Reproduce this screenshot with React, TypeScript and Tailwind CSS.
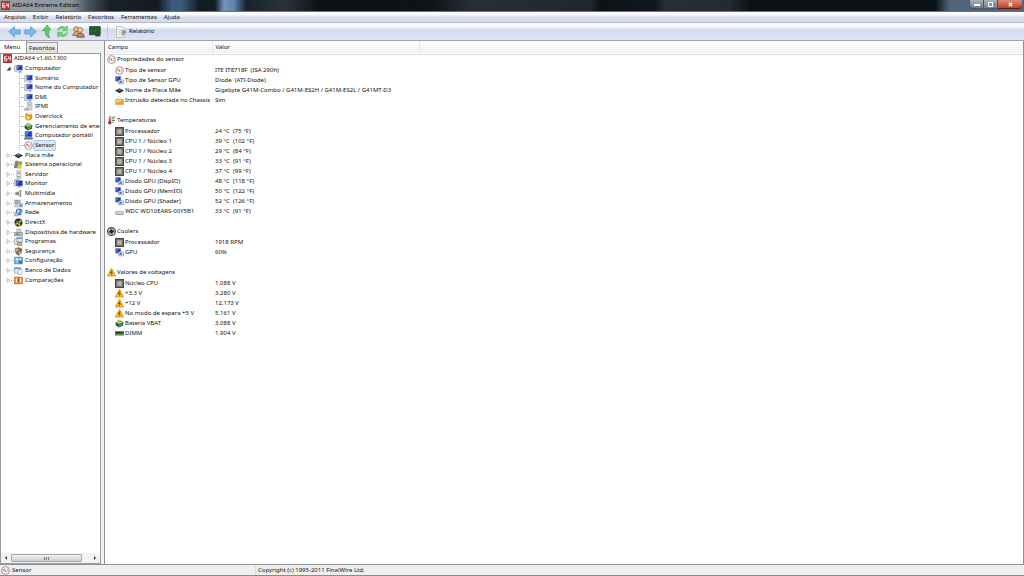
import { useState } from 'react'
import type { ReactNode } from 'react'
import clsx from 'clsx'

type IconName =
  | 'aida' | 'pc' | 'ipmi' | 'flame' | 'battery' | 'laptop' | 'sensor' | 'board' | 'windows' | 'server'
  | 'monitor' | 'speaker' | 'storage' | 'network' | 'directx' | 'devices' | 'programs' | 'shield'
  | 'config' | 'database' | 'compare' | 'gpu' | 'lock' | 'thermo' | 'chip' | 'disk' | 'fan' | 'warning' | 'dimm'

const screens = (
  <>
    <path d="M1 3h4v11H1z" fill="#d5d9e0" stroke="#a2a8b3" />
    <path d="M5 2h10v9H5z" fill="#1d36b8" stroke="#9aa6c4" />
    <path d="M6 3h5l-4 6H6z" fill="#5a7cf0" />
    <path d="M8 12h5v2h2v1H6v-1h2z" fill="#9aa1ad" />
  </>
)

const ICONS: Record<IconName, ReactNode> = {
  aida: (
    <>
      <path d="M0 0h16v16H0z" fill="#b83030" />
      <path d="M7 4H3v8h4V8H3M10 4v4h4M13 4v8" fill="none" stroke="#fff" strokeWidth="1.5" />
    </>
  ),
  pc: screens,
  ipmi: (
    <>
      <path d="M6 1h8v13H6z" fill="#d5d7da" stroke="#9b9ea3" />
      <path d="M8 4h4M8 6h4" stroke="#999" />
      <path d="M1 11h7v4H1z" fill="#c9bcc1" stroke="#999" />
    </>
  ),
  flame: (
    <>
      <path d="M4 1c2 1 3 3 5 4l4-2c4 5 2 12-5 12S0 9 4 1z" fill="#ef8c22" />
      <path d="M5 5c2 2 5 3 6 6 0 3-8 3-7-1z" fill="#ffcf62" />
    </>
  ),
  battery: (
    <>
      <path d="M1 6l8-4 6 4-1 6-7 3-6-4z" fill="#35543c" />
      <path d="M2 6l7-3 5 3-7 3z" fill="#9ccf8a" />
      <path d="M7 10l6-3v3l-6 4z" fill="#4aa648" />
      <path d="M3 3l3-2 2 2-3 2z" fill="#e2c14b" />
    </>
  ),
  laptop: (
    <>
      <path d="M2 1h12v9H2z" fill="#2038c4" stroke="#556" />
      <path d="M3 2h6L4 9H3z" fill="#6482ee" />
      <path d="M1 11h14l1 4H0z" fill="#5c6f9e" />
    </>
  ),
  sensor: (
    <>
      <circle cx="8" cy="8" r="7" fill="#f8f1ee" stroke="#a08a88" strokeWidth="1.5" />
      <path d="M4 10a4 4 0 0 1 1-5M12 10a4 4 0 0 0-1-5" fill="none" stroke="#c08a80" strokeWidth="1.5" />
      <path d="M6 5l3 6" stroke="#b8433a" strokeWidth="1.5" />
    </>
  ),
  board: (
    <>
      <path d="M0 8l8-4 8 4-8 5z" fill="#2d2d2d" />
      <path d="M4 7l4-2 4 2-4 2z" fill="#777" />
    </>
  ),
  windows: (
    <>
      <path d="M2 2c2-1 4-1 6 0L7 8C5 7 3 7 1 8z" fill="#e4602c" />
      <path d="M8 2c2 1 5 1 7 0l-1 6c-2 1-5 1-7 0z" fill="#6fb443" />
      <path d="M1 8c2-1 4-1 6 0l-1 7c-2-1-4-1-6 0z" fill="#3f7fd0" />
      <path d="M7 8c2 1 5 1 7 0l-1 7c-2 1-5 1-7 0z" fill="#f2c13a" />
    </>
  ),
  server: (
    <>
      <path d="M5 1h7v14H5z" fill="#e0e6ea" stroke="#95a4ac" />
      <path d="M6 4h5M6 6h5" stroke="#5f7c8c" />
      <path d="M6 12h5" stroke="#57a867" strokeWidth="2" />
    </>
  ),
  monitor: (
    <>
      <path d="M1 1h8v11H1z" fill="#ccd2e2" stroke="#8b93ab" />
      <path d="M4 3h11v9H4z" fill="#1a2fc0" stroke="#6372a8" />
      <path d="M5 4h5l-4 6H5z" fill="#5775f0" />
      <path d="M7 13h6v2H7z" fill="#8790a5" />
    </>
  ),
  speaker: (
    <>
      <path d="M3 6h4l5-4v12l-5-4H3z" fill="#8d929b" stroke="#5c6068" />
      <path d="M10 4v8" stroke="#d6d9df" strokeWidth="2" />
    </>
  ),
  storage: (
    <>
      <path d="M1 2h10v5H1z" fill="#bfcbd0" stroke="#72858f" />
      <path d="M2 8h13v6H2z" fill="#dde3e6" stroke="#72858f" />
      <path d="M9 10h5v3H9z" fill="#3b9c78" />
      <path d="M3 4h5M4 10h3" stroke="#4d626c" />
    </>
  ),
  network: (
    <>
      <circle cx="9" cy="7" r="6" fill="#3c7fca" />
      <path d="M6 3l4 1-1 4-3 1zM11 8l3-2-1 5z" fill="#e3eff9" />
      <path d="M1 9h6v5H1z" fill="#c5d8ec" stroke="#5f7fa8" />
    </>
  ),
  directx: (
    <>
      <circle cx="8" cy="8" r="7" fill="#272a20" />
      <path d="M3 4l5 3 4-4 2 3-4 3 2 4-3 1-2-4-4 3-1-3 4-2z" fill="#e6c92f" />
      <circle cx="8" cy="8" r="2" fill="#3b7c34" />
    </>
  ),
  devices: (
    <>
      <path d="M5 2h7v6H5z" fill="#d4d6d8" stroke="#888d92" />
      <path d="M1 8h14v6H1z" fill="#b6babd" stroke="#777d82" />
      <path d="M3 11h6" stroke="#4c8f56" strokeWidth="2" />
    </>
  ),
  programs: (
    <>
      <path d="M1 3h10v10H1z" fill="#efe8d2" stroke="#8c8976" />
      <path d="M5 1h10v8H5z" fill="#dfe7ef" stroke="#7f8a96" />
      <path d="M5 2h10" stroke="#4f82c0" strokeWidth="2" />
      <path d="M6 9h8v6H6z" fill="#c9b48a" stroke="#7d6c4c" />
    </>
  ),
  shield: (
    <>
      <path d="M8 1l6 2c0 6-1 9-6 12C3 12 2 9 2 3z" fill="#3d69b8" stroke="#8a7a5a" />
      <path d="M8 2v6H3V4zM8 8h5c-1 3-2 4-5 6z" fill="#e9b62e" />
      <path d="M8 2l5 2v4H8z" fill="#c4552c" />
    </>
  ),
  config: (
    <>
      <path d="M1 2h14v12H1z" fill="#68a9dc" stroke="#3a78ac" />
      <path d="M3 4h5v4H3zM10 4h3v3h-3zM3 10h4v2H3z" fill="#d7ecf9" />
      <path d="M9 9h5v4H9z" fill="#2b6aa3" />
    </>
  ),
  database: (
    <>
      <path d="M1 3h11v10H1z" fill="#dfe8f2" stroke="#7890ab" />
      <path d="M1 4h11" stroke="#4c7db6" strokeWidth="2" />
      <path d="M8 6h6v9H8z" fill="#f5f7f9" stroke="#8797a8" />
    </>
  ),
  compare: (
    <>
      <path d="M1 2h14v12H1z" fill="#e8762b" stroke="#b65e17" />
      <path d="M3 4h3v8H3zM10 4h3v8h-3z" fill="#ffe4bb" />
      <path d="M7 5h2v6H7z" fill="#c23c1c" />
    </>
  ),
  gpu: (
    <>
      <path d="M1 1h9v8H1z" fill="#2237b8" stroke="#6a78a8" />
      <path d="M2 2h4L3 7H2z" fill="#6484f2" />
      <path d="M6 7h9v7H6z" fill="#dde2ec" stroke="#7c86a0" />
      <path d="M8 9h4v3H8z" fill="#3b54c8" />
    </>
  ),
  lock: (
    <>
      <path d="M5 6V3a3 3 0 0 1 5 0" fill="none" stroke="#d8c8a0" strokeWidth="1.5" />
      <path d="M1 6h14v9H1z" fill="#f2a024" stroke="#dc8e24" />
      <path d="M2 7h12L2 12z" fill="#ffd77a" />
    </>
  ),
  thermo: (
    <>
      <path d="M4 1h3v9H4z" fill="#eee" stroke="#8a4444" />
      <circle cx="5" cy="12" r="3" fill="#b3242c" />
      <path d="M5 4v7" stroke="#b3242c" strokeWidth="2" />
      <path d="M9 2h6M9 5h4M9 8h5M9 11h3" stroke="#555" strokeWidth="1.5" />
    </>
  ),
  chip: (
    <>
      <path d="M1 1h14v14H1z" fill="#77776f" stroke="#484844" strokeWidth="2" />
      <path d="M4 4h8v8H4z" fill="#b4b4ac" />
    </>
  ),
  disk: (
    <>
      <path d="M1 8l2-2h10l2 2z" fill="#ececec" />
      <path d="M1 8h14v5H1z" fill="#d6d6d6" stroke="#999" />
      <path d="M3 13h11" stroke="#777" />
    </>
  ),
  fan: (
    <>
      <circle cx="8" cy="8" r="7" fill="#d8d8d8" stroke="#444" strokeWidth="2" />
      <path d="M8 8L5 3h5zM8 8l5-3v5zM8 8l3 5H6zM8 8l-5 3V6z" fill="#555" />
      <circle cx="8" cy="8" r="3" fill="#1c1c1c" />
    </>
  ),
  warning: (
    <>
      <path d="M8 1l7 13H1z" fill="#fbb52c" stroke="#eda324" strokeWidth="2" strokeLinejoin="round" />
      <path d="M9 4L6 8h3l-1 4" fill="none" stroke="#6b3c08" strokeWidth="1.5" />
    </>
  ),
  dimm: (
    <>
      <path d="M0 4h16v7H0z" fill="#3a7a48" />
      <path d="M2 5h3v3H2zM6 5h3v3H6zM10 5h3v3h-3z" fill="#28352b" />
      <path d="M0 11h16" stroke="#b9a650" strokeWidth="2" />
    </>
  ),
}

function Icon({ name }: { name: IconName }) {
  return <svg viewBox="0 0 16 16" className="size-[9px] shrink-0" aria-hidden="true">{ICONS[name]}</svg>
}

const MENUS = ['Arquivo', 'Exibir', 'Relatório', 'Favoritos', 'Ferramentas', 'Ajuda']

interface Node {
  label: string
  icon: IconName
  level: 0 | 1 | 2
  open?: boolean
}

const TREE: Node[] = [
  { label: 'AIDA64 v1.60.1300', icon: 'aida', level: 0 },
  { label: 'Computador', icon: 'pc', level: 1, open: true },
  { label: 'Sumário', icon: 'pc', level: 2 },
  { label: 'Nome do Computador', icon: 'pc', level: 2 },
  { label: 'DMI', icon: 'pc', level: 2 },
  { label: 'IPMI', icon: 'ipmi', level: 2 },
  { label: 'Overclock', icon: 'flame', level: 2 },
  { label: 'Gerenciamento de ener', icon: 'battery', level: 2 },
  { label: 'Computador portátil', icon: 'laptop', level: 2 },
  { label: 'Sensor', icon: 'sensor', level: 2 },
  { label: 'Placa mãe', icon: 'board', level: 1 },
  { label: 'Sistema operacional', icon: 'windows', level: 1 },
  { label: 'Servidor', icon: 'server', level: 1 },
  { label: 'Monitor', icon: 'monitor', level: 1 },
  { label: 'Multimídia', icon: 'speaker', level: 1 },
  { label: 'Armazenamento', icon: 'storage', level: 1 },
  { label: 'Rede', icon: 'network', level: 1 },
  { label: 'DirectX', icon: 'directx', level: 1 },
  { label: 'Dispositivos de hardware', icon: 'devices', level: 1 },
  { label: 'Programas', icon: 'programs', level: 1 },
  { label: 'Segurança', icon: 'shield', level: 1 },
  { label: 'Configuração', icon: 'config', level: 1 },
  { label: 'Banco de Dados', icon: 'database', level: 1 },
  { label: 'Comparações', icon: 'compare', level: 1 },
]

interface Group {
  title: string
  icon: IconName
  rows: [IconName, string, string][]
}

const GROUPS: Group[] = [
  {
    title: 'Propriedades do sensor',
    icon: 'sensor',
    rows: [
      ['sensor', 'Tipo de sensor', 'ITE IT8718F  (ISA 290h)'],
      ['gpu', 'Tipo de Sensor GPU', 'Diode  (ATI-Diode)'],
      ['board', 'Nome da Placa Mãe', 'Gigabyte G41M-Combo / G41M-ES2H / G41M-ES2L / G41MT-D3'],
      ['lock', 'Intrusão detectada no Chassis', 'Sim'],
    ],
  },
  {
    title: 'Temperaturas',
    icon: 'thermo',
    rows: [
      ['chip', 'Processador', '24 °C  (75 °F)'],
      ['chip', 'CPU 1 / Núcleo 1', '39 °C  (102 °F)'],
      ['chip', 'CPU 1 / Núcleo 2', '29 °C  (84 °F)'],
      ['chip', 'CPU 1 / Núcleo 3', '33 °C  (91 °F)'],
      ['chip', 'CPU 1 / Núcleo 4', '37 °C  (99 °F)'],
      ['gpu', 'Diodo GPU (DispIO)', '48 °C  (118 °F)'],
      ['gpu', 'Diodo GPU (MemIO)', '50 °C  (122 °F)'],
      ['gpu', 'Diodo GPU (Shader)', '52 °C  (126 °F)'],
      ['disk', 'WDC WD10EARS-00Y5B1', '33 °C  (91 °F)'],
    ],
  },
  {
    title: 'Coolers',
    icon: 'fan',
    rows: [
      ['chip', 'Processador', '1918 RPM'],
      ['gpu', 'GPU', '60%'],
    ],
  },
  {
    title: 'Valores de voltagens',
    icon: 'warning',
    rows: [
      ['chip', 'Núcleo CPU', '1.088 V'],
      ['warning', '+3.3 V', '3.280 V'],
      ['warning', '+12 V', '12.173 V'],
      ['warning', 'No modo de espera +5 V', '5.161 V'],
      ['battery', 'Bateria VBAT', '3.088 V'],
      ['dimm', 'DIMM', '1.904 V'],
    ],
  },
]

function TitleBar() {
  return (
    <header className="flex h-[12px] shrink-0 items-center border-b border-[#6d7077] bg-[linear-gradient(90deg,#959ca3_0px,#8f979e_70px,#4a545e_88px,#182028_110px,#141b23_158px,#3c5a7a_172px,#3c5a7a_182px,#131b23_200px,#141c24_215px,#7295bd_224px,#5f84ad_234px,#18222c_246px,#2b333a_285px,#0a1117_320px,#0c1319_430px,#262f36_470px,#20282f_590px,#0b1319_600px,#0f181f_655px,#262f36_665px,#222b32_730px,#0a1218_750px,#0a1218_935px,#51647a_950px)] pl-px">
      <Icon name="aida" />
      <h1 className="ml-[2px] flex-1 text-black">AIDA64 Extreme Edition</h1>
      <div className="flex h-[9px] self-start pr-[2px]">
        <button aria-label="Minimizar" className="flex w-[15px] items-end justify-center rounded-bl-sm border border-t-0 border-[#4a535f] bg-linear-to-b from-[#a9b2bf] to-[#6e7a8b] pb-[2px]">
          <span className="h-[2px] w-[6px] bg-white" />
        </button>
        <button aria-label="Maximizar" className="flex w-[14px] items-center justify-center border-r border-b border-[#4a535f] bg-linear-to-b from-[#a9b2bf] to-[#6e7a8b]">
          <span className="size-[5px] border border-white" />
        </button>
        <button aria-label="Fechar" className="flex w-[24px] items-center justify-center rounded-br-sm border-b border-[#5c1c12] bg-linear-to-b from-[#e08a78] to-[#c43a20]">
          <svg viewBox="0 0 6 6" className="size-[5px]"><path d="M1 1l4 4M5 1L1 5" stroke="#fff" strokeWidth="1.6" /></svg>
        </button>
      </div>
    </header>
  )
}

const toolButton = 'flex h-[14px] w-[16px] items-center justify-center'

function Toolbar() {
  return (
    <div role="toolbar" className="flex h-[18px] shrink-0 items-center border-b border-[#9fa3ae] bg-linear-to-b from-[#fafbfe] from-20% via-[#d3dbed] via-40% to-[#dfe4f3] pl-[6px]">
      <button aria-label="Voltar" className={toolButton}>
        <svg viewBox="0 0 16 16" className="size-[13px]"><path d="M1 8l7-6v4h7v5H8v4z" fill="#7db7e6" stroke="#5f9dd2" /></svg>
      </button>
      <button aria-label="Avançar" className={toolButton}>
        <svg viewBox="0 0 16 16" className="size-[13px]"><path d="M15 8L8 2v4H1v5h7v4z" fill="#7db7e6" stroke="#5f9dd2" /></svg>
      </button>
      <button aria-label="Acima" className={toolButton}>
        <svg viewBox="0 0 16 16" className="size-[13px]"><path d="M9 0l4 6h-2c-1 4-1 7 1 10-5-2-6-5-5-9H3z" fill="#5fcf62" stroke="#3dac48" /></svg>
      </button>
      <button aria-label="Atualizar" className={toolButton}>
        <svg viewBox="0 0 16 16" className="size-[13px]">
          <path d="M2 7c0-5 6-7 9-4l3-2v6H8l2-2C8 4 5 4 2 7z" fill="#6ed072" stroke="#4bb153" strokeWidth=".6" />
          <path d="M14 9c0 5-6 7-9 4l-3 2V9h6l-2 2c2 1 5 1 8-2z" fill="#6ed072" stroke="#4bb153" strokeWidth=".6" />
        </svg>
      </button>
      <button aria-label="Usuários" className={toolButton}>
        <svg viewBox="0 0 16 16" className="size-[13px]">
          <circle cx="5" cy="5" r="3" fill="#e8c48c" stroke="#8c6530" />
          <path d="M1 13c0-6 8-6 8 0z" fill="#d8b04c" stroke="#8c6530" />
          <circle cx="10" cy="6" r="3" fill="#f0d2a4" stroke="#8c6530" />
          <path d="M6 15c0-7 9-7 9 0z" fill="#c08468" stroke="#7a4a30" />
        </svg>
      </button>
      <button aria-label="Monitoramento" className={toolButton}>
        <svg viewBox="0 0 16 16" className="size-[13px]">
          <path d="M2 2h13v10H2z" fill="#1b5a2b" stroke="#2c4033" />
          <path d="M3 9l3-3 2 2 3-4 3 4" fill="none" stroke="#2f7d40" />
          <path d="M9 12h6v2H9z" fill="#334" />
        </svg>
      </button>
      <span className="mx-[5px] h-[13px] w-px bg-[#c3cadb]" />
      <button className="flex items-center gap-[2px] pl-[2px]">
        <svg viewBox="0 0 16 16" className="size-[12px]">
          <path d="M2 1h8l3 3v11H2z" fill="#fbfbfb" stroke="#a9aaab" />
          <path d="M4 5h5M4 8h5M4 11h4" stroke="#a9b1b8" />
          <path d="M10 5l5 3-5 5-1-3z" fill="#8aa893" stroke="#66796b" strokeWidth=".6" />
        </svg>
        Relatório
      </button>
    </div>
  )
}

function TreeRow({ node, selected, onSelect }: { node: Node; selected: boolean; onSelect: () => void }) {
  return (
    <li
      role="treeitem"
      aria-selected={selected}
      className={clsx(
        'flex min-h-0 items-center whitespace-nowrap',
        node.level === 0 && 'pl-[2px]',
        node.level === 1 && 'pl-[5px]',
        node.level === 2 && 'pl-[18px]',
      )}
    >
      {node.level === 1 && (
        <>
          <svg viewBox="0 0 5 5" className="size-[5px] shrink-0">
            {node.open
              ? <path d="M4.5 .5v4h-4z" fill="#333" />
              : <path d="M1 .5l3 2-3 2z" fill="#fff" stroke="#aaa" strokeWidth=".7" />}
          </svg>
          <span className="w-[3px] border-t border-dotted border-[#bbb]" />
        </>
      )}
      {node.level === 2 && <span className="h-full w-[5px] shrink-0 border-l border-dotted border-[#bbb] bg-[linear-gradient(#ccc,#ccc)] bg-[length:5px_1px] bg-center bg-no-repeat" />}
      <Icon name={node.icon} />
      <button
        onClick={onSelect}
        className={clsx(
          'ml-px h-[9px] rounded-[1px] px-px',
          selected && 'bg-[#d5e9fb] outline outline-[#a9cbe9]',
        )}
      >
        {node.label}
      </button>
    </li>
  )
}

function Sidebar({ selected, onSelect }: { selected: string; onSelect: (s: string) => void }) {
  return (
    <aside className="flex w-[101px] shrink-0 flex-col bg-[#f0f0f0]">
      <div role="tablist" className="flex h-[12px] shrink-0 items-end">
        <button role="tab" aria-selected="true" className="h-[12px] w-[27px] border-r border-[#9a9a9a] bg-white pr-[2px]">Menu</button>
        <button role="tab" aria-selected="false" className="h-[11px] w-[31px] border-t border-r border-[#9a9a9a] bg-linear-to-b from-[#f2f2f2] to-[#dcdcdc]">Favoritos</button>
      </div>
      <div className="flex min-h-0 flex-1 flex-col overflow-hidden border border-[#9a9a9a] bg-white">
        <ul role="tree" className="grid h-[231px] shrink-0 auto-rows-fr overflow-hidden">
          {TREE.map(node => (
            <TreeRow
              key={node.label}
              node={node}
              selected={node.label === selected}
              onSelect={() => onSelect(node.label)}
            />
          ))}
        </ul>
        <div className="mt-auto flex h-[10px] shrink-0 items-center bg-[#f3f3f3]">
          <button aria-label="Rolar para a esquerda" className="flex w-[10px] justify-center">
            <svg viewBox="0 0 4 4" className="size-[4px]"><path d="M3 0v4L1 2z" fill="#333" /></svg>
          </button>
          <div className="flex h-[8px] w-[71px] items-center justify-center gap-px rounded-[1px] border border-[#a9a9a9] bg-linear-to-b from-[#f3f3f3] to-[#cfcfcf]">
            <span className="h-[3px] w-px bg-[#777]" />
            <span className="h-[3px] w-px bg-[#777]" />
            <span className="h-[3px] w-px bg-[#777]" />
          </div>
          <button aria-label="Rolar para a direita" className="ml-auto flex w-[10px] justify-center">
            <svg viewBox="0 0 4 4" className="size-[4px]"><path d="M1 0v4l2-2z" fill="#333" /></svg>
          </button>
        </div>
      </div>
    </aside>
  )
}

function SensorTable() {
  return (
    <main className="min-w-0 flex-1 overflow-hidden border-x border-[#8f9298] bg-white">
      <table className="w-full table-fixed border-collapse text-left whitespace-pre">
        <colgroup>
          <col className="w-[107px]" />
          <col className="w-[207px]" />
          <col />
        </colgroup>
        <thead>
          <tr className="h-[13px] border-b border-[#dcdcdc] bg-linear-to-b from-white to-[#f1f2f3]">
            <th className="border-r border-[#e6e6e6] p-0 pl-[3px] font-normal">Campo</th>
            <th className="border-r border-[#e6e6e6] p-0 pl-[3px] font-normal">Valor</th>
            <th className="p-0" />
          </tr>
        </thead>
        {GROUPS.map((g, i) => (
          <tbody key={g.title}>
            {i > 0 && <tr className="h-[10px]"><td colSpan={3} className="p-0" /></tr>}
            <tr className="h-[11px]">
              <th colSpan={3} scope="rowgroup" className="p-0 pl-[2px] font-normal">
                <span className="flex items-center gap-px"><Icon name={g.icon} />{g.title}</span>
              </th>
            </tr>
            {g.rows.map(([icon, label, value]) => (
              <tr key={label} className="h-[10px]">
                <td className="p-0 pl-[10px]">
                  <span className="flex items-center gap-px"><Icon name={icon} />{label}</span>
                </td>
                <td className="p-0 pl-[3px]">{value}</td>
                <td className="p-0" />
              </tr>
            ))}
          </tbody>
        ))}
      </table>
    </main>
  )
}

export default function App() {
  const [selected, setSelected] = useState('Sensor')

  return (
    <div className="flex h-screen flex-col overflow-hidden bg-[#f0f0f0] font-['Noto_Sans','Open_Sans',sans-serif] text-[6px] leading-[9px] text-[#111]">
      <TitleBar />
      <nav className="flex h-[11px] shrink-0 items-center border-b border-[#b4b8c4] bg-linear-to-b from-[#fbfcfe] from-20% to-[#d6dced] to-60%">
        {MENUS.map(m => <button key={m} className="pr-[3px] pl-[4px]">{m}</button>)}
      </nav>
      <Toolbar />
      <div className="flex min-h-0 flex-1 gap-[3px]">
        <Sidebar selected={selected} onSelect={setSelected} />
        <SensorTable />
      </div>
      <footer className="flex h-[12px] shrink-0 items-center border-t border-b border-t-[#8f9298] border-b-[#7d8f98] bg-[#f0efee]">
        <span className="flex w-[255px] items-center gap-[2px] pl-px"><Icon name="sensor" />{selected}</span>
        <span className="border-l border-[#d9d9d9] pl-[2px]">Copyright (c) 1995-2011 FinalWire Ltd.</span>
      </footer>
    </div>
  )
}
